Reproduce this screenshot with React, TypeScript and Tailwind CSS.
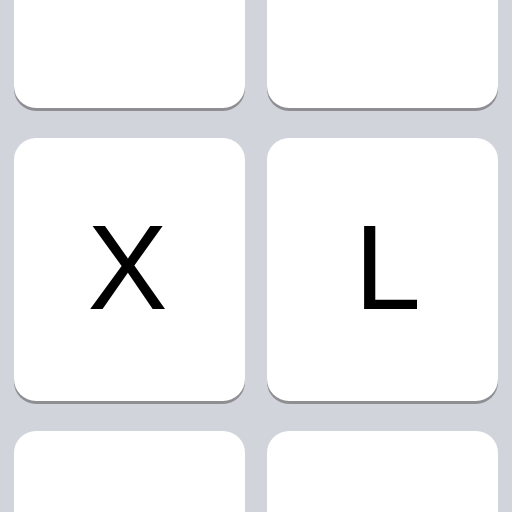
const keys = [
  { label: "", nudge: "" },
  { label: "", nudge: "" },
  { label: "X", nudge: "pr-[4px]" },
  { label: "L", nudge: "pl-[10px]" },
  { label: "", nudge: "" },
  { label: "", nudge: "" },
]

function Key({ label, nudge }: { label: string; nudge: string }) {
  return (
    <div className={`flex h-[263px] items-center justify-center rounded-[22px] bg-white pb-[6px] shadow-[0_3px_0_#8e8e93] ${nudge}`}>
      <span className="text-[120px] leading-none text-black [font-family:'Liberation_Sans',Arial,sans-serif]">
        {label}
      </span>
    </div>
  )
}

export default function App() {
  return (
    <div className="h-[512px] w-[512px] overflow-hidden bg-[#d1d5db]">
      <div className="-mt-[155px] grid grid-cols-2 gap-x-[22px] gap-y-[30px] px-[14px]">
        {keys.map((k, i) => (
          <Key key={i} label={k.label} nudge={k.nudge} />
        ))}
      </div>
    </div>
  )
}
